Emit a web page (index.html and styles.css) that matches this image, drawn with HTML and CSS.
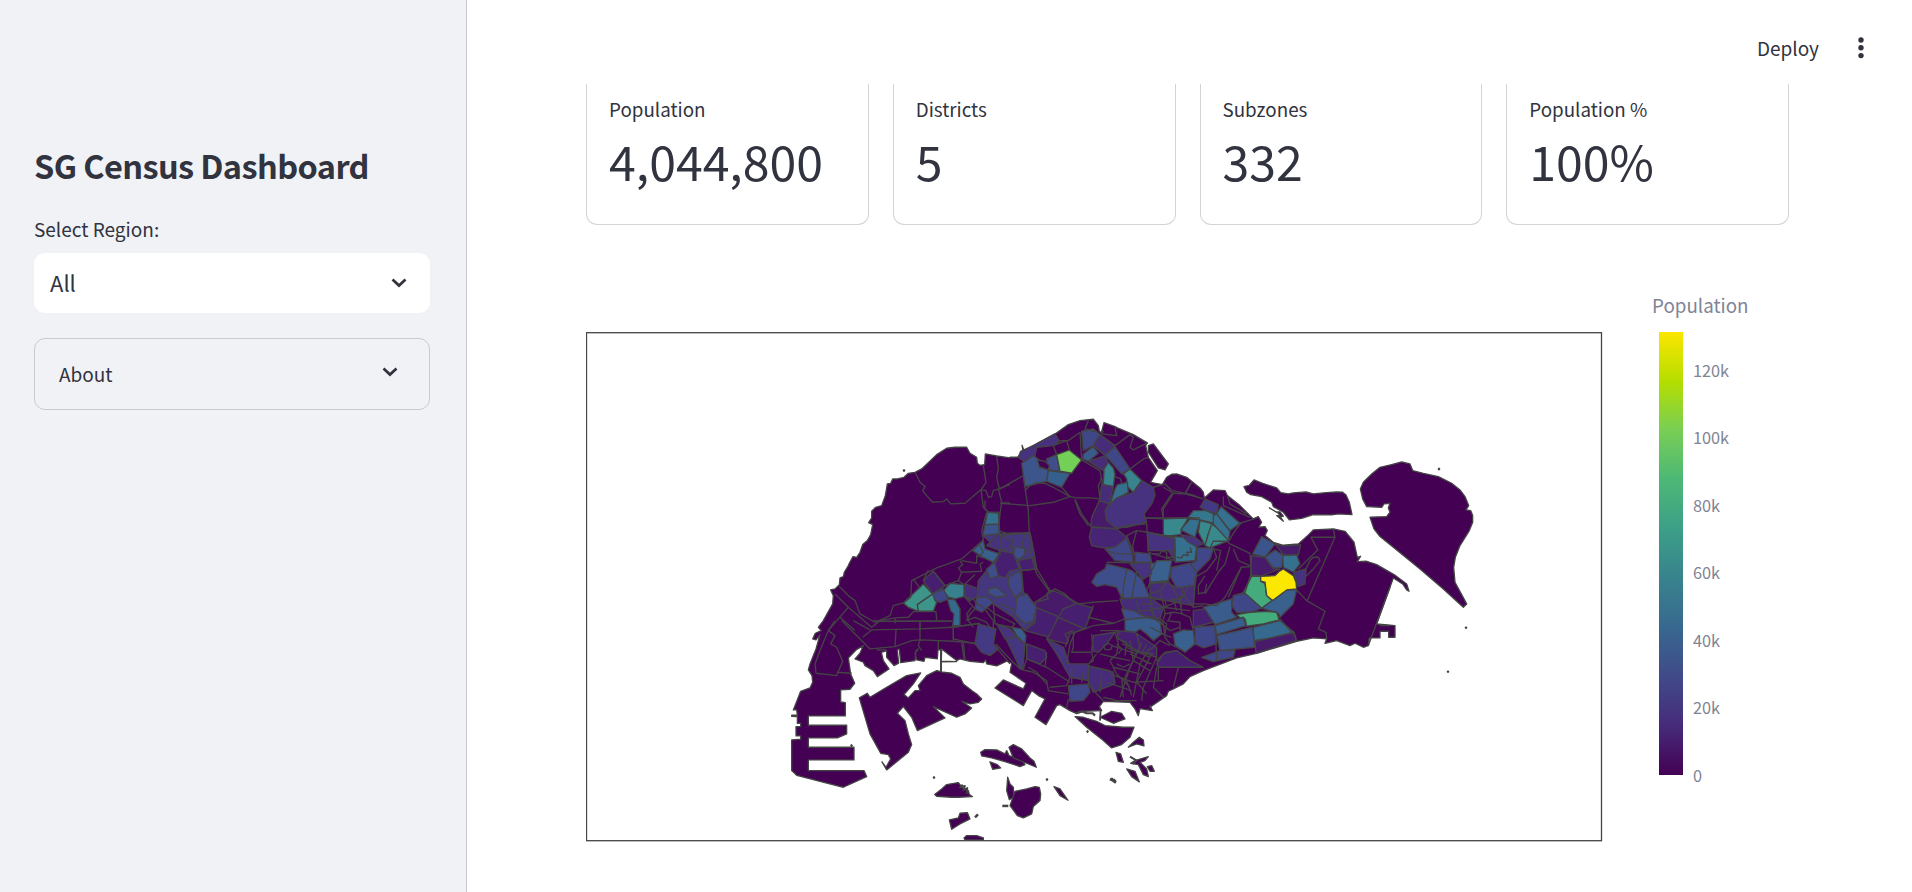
FILE: index.html
```html
<!DOCTYPE html>
<html lang="en">
<head>
<meta charset="utf-8">
<title>SG Census Dashboard</title>
<link rel="stylesheet" href="styles.css">
</head>
<body>
<div class="app">
  <aside class="sidebar">
    <h1 class="title">SG Census Dashboard</h1>
    <label class="field-label">Select Region:</label>
    <div class="select"><span>All</span><svg class="chevron" width="16" height="10" viewBox="0 0 16 10"><path d="M1.5 1.5 8 7.6 14.5 1.5"/></svg></div>
    <div class="expander"><span>About</span><svg class="chevron" width="16" height="10" viewBox="0 0 16 10"><path d="M1.5 1.5 8 7.6 14.5 1.5"/></svg></div>
  </aside>
  <main class="main">
    <header class="header">
      <span class="deploy">Deploy</span>
      <svg class="dots" width="6" height="22" viewBox="0 0 6 22"><circle cx="3" cy="3" r="2.7"/><circle cx="3" cy="10.8" r="2.7"/><circle cx="3" cy="18.6" r="2.7"/></svg>
    </header>
    <section class="metrics">
      <div class="metric"><div class="metric-label">Population</div><div class="metric-value">4,044,800</div></div>
      <div class="metric"><div class="metric-label">Districts</div><div class="metric-value">5</div></div>
      <div class="metric"><div class="metric-label">Subzones</div><div class="metric-value">332</div></div>
      <div class="metric"><div class="metric-label">Population %</div><div class="metric-value">100%</div></div>
    </section>
    <section class="chart">
      <svg class="map" id="map" width="1017" height="510" viewBox="586 332 1017 510"></svg>
      <div class="legend">
        <div class="legend-title">Population</div>
        <div class="legend-body">
          <div class="ramp"></div>
          <div class="ticks"><span>120k</span><span>100k</span><span>80k</span><span>60k</span><span>40k</span><span>20k</span><span>0</span></div>
        </div>
      </div>
    </section>
  </main>
</div>
<script src="map.js"></script>
</body>
</html>
```
FILE: styles.css
```css
* { box-sizing: border-box; }
body { margin: 0; background: #fff; color: #31333f; font-family: "Noto Sans CJK SC", "Noto Sans", sans-serif; }
.app { display: flex; width: 1912px; height: 892px; overflow: hidden; }
.sidebar { width: 467px; height: 892px; padding: 141px 36px 0 34px; background: #f0f2f6; border-right: 1px solid #c8cbd2; }
.title { margin: 0; height: 48px; line-height: 48px; font-size: 32.5px; font-weight: 600; letter-spacing: -0.6px; white-space: nowrap; }
.field-label { display: block; margin-top: 25px; height: 30px; line-height: 30px; font-size: 19px; }
.select { display: flex; align-items: center; justify-content: space-between; margin-top: 9px; height: 60px; padding: 0 23px 0 16px; border-radius: 11px; background: #fff; font-size: 22px; line-height: 30px; }
.select span { margin-bottom: 2px; }
.expander { display: flex; align-items: center; justify-content: space-between; margin-top: 25px; height: 72px; padding: 0 31px 0 24px; border: 1px solid #c8cad0; border-radius: 11px; font-size: 19px; line-height: 30px; }
.expander span { margin-bottom: 1px; }
.chevron { fill: none; stroke: #31333f; stroke-width: 2.7; }
.expander .chevron { margin-bottom: 4px; }
.main { flex: 1; display: flex; flex-direction: column; }
.header { display: flex; flex: none; align-items: center; justify-content: flex-end; gap: 39px; height: 84px; padding: 12px 48px 0 0; background: #fff; }
.deploy { font-size: 19px; line-height: 30px; }
.dots { fill: #31333f; }
.metrics { display: grid; grid-template-columns: repeat(4, 1fr); gap: 24px; width: 1203px; margin-left: 119px; flex: none; height: 141px; }
.metric { padding: 10px 22px 0; border: 1px solid #d3d4d8; border-top: 0; border-radius: 0 0 11px 11px; }
.metric-label { height: 30px; line-height: 30px; font-size: 18.8px; }
.metric-value { height: 60px; margin-top: 6px; line-height: 60px; font-size: 48.2px; white-space: nowrap; }
.chart { display: flex; margin: 64px 0 0 119px; }
.map { display: block; flex: none; margin-top: 43px; }
.legend { margin-left: 49px; color: #808495; }
.legend-title { height: 32px; line-height: 32px; font-size: 18.8px; }
.legend-body { display: flex; margin: 10px 0 0 7px; }
.ramp { width: 24px; height: 443px; margin-top: 1px; background: linear-gradient(to top, #440154, #462b7a 11.11%, #404a89 22.22%, #38688f 33.33%, #38838d 44.44%, #3c9f87 55.55%, #4cb876 66.66%, #78ce55 77.77%, #b5de00 88.88%, #fbe600); }
.ticks { display: flex; flex-direction: column; justify-content: space-between; height: 429px; margin: 26.5px 0 0 10px; font-size: 16.3px; line-height: 24px; }
```
FILE: map.js
```js
// Vertices are stored per map tile in thirds of a pixel; a letter switches tile.
var TILES = {
  A: [780, 430.6], B: [1000, 410.6], C: [1150, 460.6], D: [1230, 450.6],
  E: [780, 620.6], F: [960, 580.6], G: [910, 700.6], H: [950, 500.6]
};
var svg = document.getElementById('map');
function points(spec) {
  var o = TILES.A;
  var out = [];
  spec.trim().split(/\s+/).forEach(function (t) {
    if (TILES[t]) { o = TILES[t]; return; }
    var p = t.split(',');
    out.push((o[0] + p[0] / 3).toFixed(2) + ',' + (o[1] + p[1] / 3).toFixed(2));
  });
  return out.join(' ');
}
function draw(kind, spec, fill, width) {
  var el = document.createElementNS('http://www.w3.org/2000/svg', kind);
  el.setAttribute('points', points(spec));
  el.setAttribute('fill', fill);
  el.setAttribute('stroke', '#444');
  el.setAttribute('stroke-width', width || 1.35);
  el.setAttribute('stroke-linejoin', 'round');
  svg.appendChild(el);
}
var BASE = '#440154';

// Land masses
[
  'E 35,358 62,356 62,346 48,346 48,318 62,318 62,308 52,308 52,288 35,287 35,284 52,284 50,268 40,268 62,212 90,202 98,185 96,165 85,148 90,130 108,85 120,42 108,58 98,55 106,38 124,30 ' +
  'A 115,590 130,570 158,520 160,495 152,478 165,475 178,462 180,442 190,438 193,425 205,405 208,398 219,378 230,380 240,365 248,342 262,330 272,312 278,282 266,276 275,262 275,242 287,230 305,225 316,195 322,160 332,158 338,145 352,145 372,140 385,128 405,125 425,115 470,72 500,53 525,50 560,50 570,68 590,80 592,98 600,104 614,102 616,70 650,76 690,82 ' +
  'B 30,140 52,140 70,125 66,104 72,120 100,105 165,70 205,42 240,30 280,26 295,45 298,62 304,66 312,36 345,48 352,52 400,72 442,97 437,105 445,140 472,180 452,215 487,222 500,200 515,191 530,190 560,200 600,232 ' +
  'C 160,95 163,112 190,88 225,90 232,105 270,135 300,165 310,175 325,168 335,185 326,200 345,198 352,210 345,225 370,245 400,254 445,250 470,228 490,208 550,205 585,212 612,245 622,290 632,287 622,303 650,302 ' +
  'D 440,342 492,372 530,400 537,422 530,418 518,400 490,382 440,520 495,525 495,560 476,560 476,542 450,542 450,562 418,562 415,585 400,590 375,578 360,585 320,570 285,578 290,565 250,562 200,572 140,590 80,608 20,622 ' +
  'H 760,510 720,528 700,550 670,565 655,572 650,585 600,620 F 570,375 577,390 540,384 535,405 525,385 510,365 430,362 418,378 425,390 370,392 350,399 330,390 300,372 290,375 258,432 225,410 255,355 235,345 215,330 190,375 105,322 130,298 190,325 198,308 150,275 155,248 140,242 110,256 80,250 77,238 70,246 30,242 0,235 ' +
  'E 530,120 512,106 485,85 484,122 530,123 484,124 484,152 482,152 482,87 474,88 472,115 435,110 432,122 410,118 405,98 415,85 408,90 405,120 362,126 358,85 352,88 356,128 342,135 320,110 320,90 304,95 310,120 327,145 292,168 280,150 255,135 250,125 225,115 240,98 250,75 228,88 205,112 212,160 224,188 210,206 182,208 182,244 196,246 196,286 85,286 85,314 200,314 200,340 172,352 85,352 85,380 222,380 222,418 85,418 85,450 252,450 260,468 190,500 50,464 35,450',
  'D 42,108 58,104 72,88 98,98 140,112 152,126 175,130 190,127 228,124 250,130 280,127 320,124 338,125 348,133 358,155 366,192 325,190 305,193 250,192 215,203 178,208 160,185 130,168 125,155 95,138 62,132 50,125',
  'D 118,172 145,188 160,212 140,195 160,197 150,184 138,184',
  'D 391,115 400,95 425,70 450,50 485,42 515,34 540,40 548,60 580,68 625,78 665,98 690,118 705,138 716,165 708,178 722,180 728,195 728,215 718,240 690,285 676,320 671,350 675,395 710,460 700,470 640,415 570,355 490,290 450,258 432,235 420,200 470,198 480,185 475,172 480,158 462,160 455,170 410,168 398,145',
  'B 445,105 460,100 505,160 495,178 475,172 445,125',
  'E 238,232 262,218 270,230 320,200 380,165 422,157 400,190 372,222 385,232 405,210 420,210 415,195 440,165 470,150 490,155 515,158 540,170 550,190 575,210 590,220 605,235 595,245 570,250 545,242 575,262 555,280 530,290 460,258 495,292 412,330 395,290 370,258 352,278 375,300 385,340 395,372 385,395 320,448 306,424 318,440 332,415 325,402 302,398 270,340',
  'G 212,155 225,147 260,148 285,160 290,150 297,165 335,178 345,192 330,198 285,183 245,172 215,166',
  'G 297,140 310,132 335,145 360,172 372,182 379,200 350,188 310,172',
  'G 240,184 262,192 272,202 248,206',
  'G 74,282 95,265 110,252 145,246 158,262 175,270 178,282 187,288 145,290 125,290 80,287',
  'G 293,230 300,250 310,260 312,290 298,297 290,270',
  'G 300,315 315,272 350,265 375,258 388,260 392,280 390,300 370,318 365,340 340,352 322,345 315,335',
  'G 432,258 450,265 474,299 450,285',
  'G 118,358 145,352 150,338 172,336 180,355 150,370 125,386',
  'G 162,412 170,405 200,405 220,412 220,418 165,418',
  'G 495,48 520,50 560,62 585,75 640,80 672,80 660,110 635,132 605,142 580,120 530,80',
  'G 570,50 605,32 635,38 645,55 610,68',
  'G 655,140 670,125 688,110 700,118 702,136 680,130',
  'G 618,155 632,160 640,185 625,182',
  'G 650,205 675,212 688,244 665,228',
  'G 675,180 715,168 705,180 690,185 710,205 715,228 700,222 685,192 662,188',
  'G 712,198 725,195 733,212 720,212'
].forEach(function (s) { draw('polygon', s, BASE, 1.3); });

// Populated subzones
[
  ['#46327e', 'B 62,122 100,105 165,70 178,92 160,105 110,110 105,135 75,155 55,140'],
  ['#3c558b', 'B 65,158 100,135 120,150 118,170 145,178 140,212 75,228 70,195'],
  ['#35608e', 'B 145,180 210,188 185,230 140,212'],
  ['#3f4e8a', 'B 140,145 170,132 180,182 145,178'],
  [BASE, 'B 112,148 135,152 148,165 145,178 118,168'],
  ['#73d056', 'B 170,132 208,118 245,148 215,188 180,182'],
  ['#3f4788', 'B 245,62 280,55 300,72 280,105 250,120'],
  ['#3a5c8c', 'B 250,130 280,108 295,128 265,152 248,145'],
  ['#472c7a', 'B 300,72 345,105 315,135 280,105'],
  ['#472c7a', 'B 265,152 315,135 325,160 310,180'],
  ['#3f4788', 'B 315,135 345,108 390,175 365,190 330,150'],
  ['#38838d', 'B 325,155 340,172 345,190 340,228 310,222 312,175'],
  ['#472c7a', 'B 305,222 340,228 328,280 298,270'],
  ['#38838d', 'B 370,190 390,175 425,210 400,245 382,228 380,205'],
  ['#35708e', 'B 352,222 382,215 385,245 350,265 330,280 345,235'],
  ['#46327e', 'B 315,300 330,280 350,262 400,245 425,210 460,230 465,255 455,280 432,310 440,335 380,350 345,352 320,330'],
  ['#471a6a', 'B 272,348 275,320 298,270 328,280 315,300 320,330 350,355'],
  ['#472474', 'B 275,350 350,355 380,380 375,395 350,410 315,412 300,410 275,405 268,380'],
  ['#3f4788', 'B 315,415 345,410 380,382 395,425 400,455 345,450'],
  ['#3d4e8a', 'H 425,245 440,220 465,205 470,190 530,205 545,210 575,235 600,292 515,292 500,260 465,252 440,258'],
  ['#38888c', 'C 40,175 115,172 95,205 92,222 40,228'],
  ['#35788e', 'C 115,170 130,150 170,150 190,160 200,190 150,178'],
  ['#35708e', 'C 120,175 150,178 135,230 92,208'],
  ['#443a83', 'C 150,140 165,115 205,132 200,160 170,150'],
  ['#38888c', 'C 150,180 190,190 175,220 165,255 145,215'],
  ['#38888c', 'C 185,190 215,210 237,240 180,262 165,255 175,220'],
  ['#35708e', 'C 200,160 213,138 270,188 240,210'],
  ['#35708e', 'C 190,165 200,160 240,212 235,240 190,190'],
  ['#35708e', 'C 70,228 110,230 140,260 135,300 75,305 75,265'],
  ['#46327e', 'C 0,218 70,228 75,300 55,270 0,265'],
  ['#46327e', 'C 92,222 135,230 160,250 140,258 115,245'],
  ['#3f4788', 'C 140,262 190,262 180,295 140,335 120,310 140,300'],
  ['#3a5c8c', 'C 0,310 50,298 65,335 50,365 0,370'],
  ['#3f4788', 'C 65,320 120,308 140,335 135,375 80,382 62,350'],
  ['#472c7a', 'C 0,370 50,365 80,382 135,375 130,435 100,430 0,410'],
  ['#3b558c', 'C 308,280 335,228 375,250 345,290'],
  ['#3b528b', 'C 345,290 375,268 400,285 395,320 370,322'],
  ['#471a6a', 'C 305,285 345,290 370,325 390,325 330,347 302,343'],
  ['#471a6a', 'C 375,250 400,256 452,253 445,283 400,283'],
  ['#35708e', 'C 398,285 440,283 450,310 430,335 400,320'],
  ['#46327e', 'C 430,335 468,325 465,370 445,378'],
  ['#44ab7c', 'C 305,347 332,347 332,362 345,368 350,405 368,420 335,443 280,395'],
  ['#3a608e', 'C 335,443 380,410 410,388 440,388 430,430 390,470 385,458'],
  ['#fbe700', 'C 332,347 375,345 388,332 400,325 430,345 438,365 440,385 410,388 368,420 350,405 345,365 332,362'],
  ['#3f4788', 'C 245,435 250,405 285,398 335,443 300,455 260,455'],
  ['#44ab7c', 'C 260,462 300,455 350,452 380,455 388,478 340,490 290,497 285,475 270,472'],
  ['#356a8e', 'C 310,500 390,480 432,515 380,530 310,540'],
  ['#3a5c8c', 'C 195,495 280,470 288,495 200,522'],
  ['#3b528b', 'C 200,525 308,500 315,560 210,570'],
  ['#471a6a', 'C 315,543 432,515 438,540 318,578'],
  ['#3f4788', 'C 155,590 210,570 255,570 250,590 190,603'],
  ['#3a5c8c', 'C 160,440 245,415 245,455 260,470 195,492'],
  ['#3a608e', 'C 70,520 100,508 130,510 135,550 105,575 75,555'],
  ['#3f4788', 'C 135,500 195,495 200,550 160,562 135,550'],
  ['#471f70', 'C 130,450 165,445 190,485 130,500'],
  ['#471f70', 'C 20,600 45,575 80,570 100,600'],
  ['#35708e', 'H 112,35 145,35 147,70 105,72'],
  ['#3b558c', 'H 105,72 147,72 150,100 98,105'],
  ['#443780', 'H 98,105 150,100 190,97 240,97 250,145 260,205 215,210 220,275 258,315 255,360 225,390 190,350 130,310 80,290 85,240 130,185 150,150'],
  ['#3a608e', 'H 68,150 100,120 105,145 148,160 130,185 95,168'],
  ['#46327e', 'H 145,100 190,125 175,145 150,150 110,135'],
  ['#3f4e8a', 'H 195,138 225,145 222,165 205,178 190,165'],
  ['#3f4e8a', 'H 110,205 135,185 145,225 120,235'],
  ['#3f4788', 'H 80,290 110,290 130,305 95,335 75,325'],
  ['#471f70', 'H 135,190 150,150 190,158 208,205 180,210 165,232 145,225'],
  ['#471f70', 'H 205,180 250,170 260,205 215,210'],
  ['#3f4788', 'H 175,230 212,210 218,270 195,290 175,255'],
  ['#3f4788', 'H 200,290 230,280 258,320 250,360 225,370 195,340'],
  ['#3f4e8a', 'H 115,265 140,260 170,285 140,290 115,278'],
  ['#472c7a', 'H 45,250 85,265 80,290 60,300 45,290'],
  ['#3c9588', 'A 370,517 430,460 458,490 412,522 415,542 385,530'],
  ['#3c9588', 'A 412,522 458,490 470,515 460,542 415,542'],
  ['#38808d', 'A 490,480 510,458 552,462 552,498 525,505 505,500'],
  ['#356a8e', 'A 502,505 525,508 540,535 540,585 518,585 522,550 512,540'],
  ['#3f4788', 'A 458,490 490,475 505,505 480,515 465,510'],
  ['#471f70', 'A 430,450 460,422 495,465 458,490'],
  ['#443a83', 'H 85,370 138,385 130,430 145,445 120,465 95,455 75,430'],
  ['#3a5c8c', 'H 185,380 215,385 228,405 225,430 200,405'],
  ['#443780', 'H 165,410 200,410 225,430 218,508 210,505 190,460'],
  ['#46327e', 'H 140,370 180,385 200,410 165,415'],
  ['#471f70', 'H 258,320 325,345 300,410 225,390 255,365'],
  ['#471a6a', 'H 255,305 310,270 345,285 380,310 340,325 340,345 325,348 258,320'],
  ['#471f70', 'H 340,325 380,308 428,322 405,385 325,350'],
  ['#471a6a', 'H 325,350 403,385 360,400 350,430 290,415 300,400'],
  ['#46327e', 'H 290,415 340,440 358,490 415,490 415,540 360,530 320,460'],
  ['#3f4788', 'H 355,555 415,550 420,575 400,600 360,602'],
  ['#472c7a', 'H 415,495 490,515 495,550 430,575 415,545'],
  ['#471f70', 'H 430,405 495,395 470,430 445,455 425,450'],
  ['#472c7a', 'H 510,295 600,290 640,320 630,355 580,345 520,325'],
  ['#3a5c8c', 'H 525,355 590,350 630,360 635,400 610,420 590,400 570,385 555,395 525,390'],
  ['#3f4e8a', 'H 515,325 550,330 590,350 525,358'],
  ['#3a608e', 'H 600,220 620,180 665,180 655,240 600,245'],
  ['#46327e', 'H 540,190 600,185 605,220 580,235'],
  ['#3f4788', 'H 555,155 600,160 605,185 555,185'],
  ['#46327e', 'H 592,95 672,110 672,150 595,150'],
  ['#471f70', 'H 620,490 640,460 680,450 720,480 760,500 625,500'],
  ['#471f70', 'H 500,390 555,395 620,440 620,470 560,450 505,415'],
  ['#471f70', 'H 230,430 285,450 290,470 270,490 230,475']
].forEach(function (z) { draw('polygon', z[1], z[0]); });

// Subzone boundaries
[
  'A 405,125 420,155 435,168 428,180 440,195 458,215 490,213 500,205 512,220 555,218 605,175 618,155 610,105',
  'A 650,76 655,115 650,140 658,175 640,180 635,198 625,200 618,180 603,178 610,230 625,245 660,248 665,215 655,175 690,162',
  'A 665,217 690,217', 'A 660,248 656,300 690,312', 'A 620,245 605,300 610,328 545,385 470,412 395,450 392,500 370,517 340,525 330,555 285,575 240,550 225,510 205,495 178,468',
  'A 165,490 205,530 275,590 300,570 345,562 385,560 400,543 468,543 470,568', 'A 205,530 145,600', 'A 180,560 225,600', 'A 345,562 345,572 515,572',
  'A 400,445 418,470', 'A 445,418 430,450', 'A 420,572 420,600', 'A 540,390 548,402 535,412 545,425 605,422 600,400 610,395', 'A 545,425 535,450', 'A 585,432 555,460', 'A 545,390 590,398 590,375 620,385', 'A 460,422 495,465 535,450 552,462',
  'A 552,498 580,505 590,520 610,530', 'A 575,530 560,550 565,570 580,590', 'A 610,530 640,570 640,600', 'A 600,345 610,365 600,375',
  'E 145,30 165,45 152,70 170,80 188,122 170,165 108,158 105,130 120,90 145,30 165,0', 'E 170,155 215,158', 'E 185,0 270,85 345,78 395,60 420,58 520,62 590,68', 'E 248,50 275,28 420,25 520,20 600,8', 'E 220,0 270,28', 'E 348,28 345,78', 'E 420,0 420,58 415,75 425,90', 'E 520,20 520,60', 'E 290,88 318,88', 'E 475,60 475,88', 'E 550,68 555,118', 'E 280,0 300,2 515,2', 'E 348,0 345,8',
  'B 0,235 70,195 75,230 85,300 90,420 110,490 150,545 165,535 195,550 215,570', 'B 75,240 90,225 110,217 135,218 160,230 210,258 160,275 90,285 0,278', 'B 0,375 85,367 90,370', 'B 185,230 210,258 230,262 270,262 298,265', 'B 225,265 245,310 270,345', 'B 245,148 300,180', 'B 300,180 305,205 295,225 300,265', 'B 208,118 200,90 160,105 170,132', 'B 240,65 245,148', 'B 178,90 205,90 240,65', 'B 345,105 390,72 400,80 390,110 400,118 442,97', 'B 345,50 350,75 305,70 310,60', 'B 265,30 255,55 290,65', 'B 390,175 430,145 445,140', 'B 460,230 495,220 515,240 575,252 600,262', 'B 575,215 555,250', 'B 515,250 485,295 490,325 432,322', 'B 432,322 600,322', 'B 350,355 380,345 440,340 445,425', 'B 380,375 410,360 445,365', 'B 410,360 398,405 400,425', 'B 300,205 310,210 305,222', 'B 345,198 362,205 365,220',
  'B 380,375 400,425 398,452', 'B 445,365 525,385 525,450 445,425', 'B 455,430 480,430 485,420 500,425 500,440 520,440',
  'C 120,70 105,100 70,98 40,80', 'C 105,100 160,115', 'C 40,175 40,145 70,98', 'C 220,108 220,135 300,170', 'C 232,105 240,130 290,160', 'C 270,188 320,172', 'C 237,240 255,210 275,185', 'C 180,262 190,242 230,242 240,250 300,278 305,347', 'C 165,430 200,435 225,410 275,318', 'C 190,262 200,290 170,330 135,350 130,430 165,430', 'C 165,400 205,335 225,310 240,258', 'C 275,320 300,318', 'C 250,265 265,300 300,315', 'C 275,318 235,410', 'C 165,345 145,375 145,400 165,395 170,370', 'C 192,265 212,270 200,330', 'C 302,343 285,395 250,405',
  'C 120,260 125,275 110,275 115,285 100,282 95,292 80,290',
  'C 482,228 503,268 445,325', 'C 482,230 555,230 550,205', 'C 555,230 472,420', 'C 440,388 470,420 525,452 505,505 528,515 530,535', 'C 432,515 440,540', 'C 390,475 430,520', 'C 465,330 480,300 490,290 505,290 510,300 490,325 465,350', 'C 655,555 720,380', 'C 690,495 720,495', 'C 195,495 200,600', 'C 100,400 130,440 160,435', 'C 100,380 90,420 95,460 120,470 130,510', 'C 50,365 30,390 0,400', 'C 30,395 40,430 45,460 70,455 100,460', 'C 10,415 45,420 50,440 10,445', 'C 50,420 90,415 95,440', 'C 45,460 35,490 60,510 90,500', 'C 65,455 55,480', 'C 0,440 20,480 40,490 45,530 60,550 100,570', 'C 0,500 40,520', 'C 0,570 30,540 60,555',
  'H 105,0 105,25 115,35', 'H 150,100 150,165', 'H 190,97 190,160', 'H 225,97 215,140 245,155', 'H 240,97 260,205 300,270 310,270', 'H 215,210 260,205', 'H 300,270 290,280 295,295 255,305', 'H 345,285 385,310 430,305 505,300', 'H 430,315 415,350 490,368 525,355', 'H 405,385 430,375 490,368', 'H 405,385 375,395 360,430', 'H 150,310 195,330 195,345', 'H 130,310 135,370 185,380 195,370', 'H 135,340 195,370', 'H 45,290 75,325 60,340 50,360 75,350 110,365 120,380 138,385', 'H 110,320 135,340', 'H 0,380 80,370', 'H 10,385 10,415 75,430', 'H 35,425 42,475', 'H 138,430 165,460 210,505', 'H 130,430 180,490', 'H 218,508 250,515 290,540 295,570 355,580', 'H 230,475 220,505', 'H 230,475 290,500 360,545', 'H 290,455 285,500', 'H 345,440 355,420 345,400 370,390', 'H 370,395 370,440 365,455 425,455 430,480 415,490', 'H 425,400 430,455', 'H 360,430 350,490', 'H 235,500 260,515 290,550', 'H 300,560 350,555 360,530', 'H 355,595 350,620', 'H 415,545 440,580 460,600', 'H 455,520 450,575', 'H 430,500 480,510', 'H 365,500 365,550', 'H 400,515 395,545',
  'H 460,435 475,428 487,435 482,447 465,447 460,435', 'H 495,395 505,430 500,460 480,480', 'H 505,415 530,425 525,465', 'H 485,435 560,460', 'H 450,460 490,470 540,480', 'H 480,480 500,520 540,560', 'H 540,420 550,480 520,540', 'H 560,400 570,440 555,470', 'H 575,425 540,500 510,590', 'H 600,440 570,490 550,590', 'H 530,440 600,470', 'H 540,460 605,490', 'H 550,480 600,510', 'H 490,500 570,520', 'H 480,520 550,545 640,540', 'H 470,545 545,570', 'H 500,490 520,500 540,490', 'H 590,430 575,460', 'H 605,460 560,545 590,580', 'H 620,470 580,560 575,600', 'H 620,500 610,560 640,590', 'H 625,500 625,540', 'H 685,500 670,560', 'H 515,530 520,590', 'H 530,540 545,585', 'H 460,590 500,600 560,600', 'H 500,430 515,445 505,460', 'H 515,430 545,440', 'H 580,455 610,460', 'H 580,480 600,490', 'H 510,400 500,390 450,390', 'H 440,460 420,485',
  'H 560,300 570,345', 'H 575,310 610,310', 'H 570,330 610,330', 'H 600,290 610,345', 'H 640,320 720,330', 'H 630,355 650,370 645,400', 'H 635,400 665,410', 'H 650,360 690,365 690,390', 'H 670,290 680,330', 'H 720,250 690,300 640,320', 'H 470,150 500,160 555,160', 'H 470,185 555,187', 'H 530,205 520,260 518,292', 'H 560,210 545,292', 'H 600,245 590,270', 'H 655,240 690,300', 'H 375,0 390,40 415,75'
].forEach(function (s) { draw('polyline', s, 'none'); });

// Islets
[
  [904, 470.5], [1439, 469], [1466, 627.7], [1448, 671.7], [851.5, 745.5], [934, 777.5], [1047, 779.5], [1087.5, 731.5], [1112, 779], [1115, 781], [1114, 780]
].forEach(function (p) {
  var x = (p[0] - 780) * 3;
  var y = (p[1] - 430.6) * 3;
  draw('polygon', 'A ' + (x - 2) + ',' + y + ' ' + x + ',' + (y - 2) + ' ' + (x + 2) + ',' + y + ' ' + x + ',' + (y + 2), '#444');
});
draw('polyline', 'G 277,316 295,316', 'none', 2.5);
draw('polyline', 'G 195,350 204,341', 'none', 2.5);
draw('polyline', 'G 158,252 150,260 165,256 160,268 172,262 170,280', 'none', 1.8);
draw('polyline', 'G 497,38 515,32 530,38 548,38 555,45', 'none', 2.2);
draw('polyline', 'G 572,25 570,60', 'none', 1.8);
draw('polyline', 'G 660,168 680,180 668,190', 'none', 2);
draw('polyline', 'G 600,235 606,238 618,246', 'none', 2.8);

// Plot frame
var frame = document.createElementNS('http://www.w3.org/2000/svg', 'rect');
frame.setAttribute('x', 586.5);
frame.setAttribute('y', 332.7);
frame.setAttribute('width', 1015);
frame.setAttribute('height', 508);
frame.setAttribute('fill', 'none');
frame.setAttribute('stroke', '#444');
frame.setAttribute('stroke-width', 1.3);
svg.appendChild(frame);
```
